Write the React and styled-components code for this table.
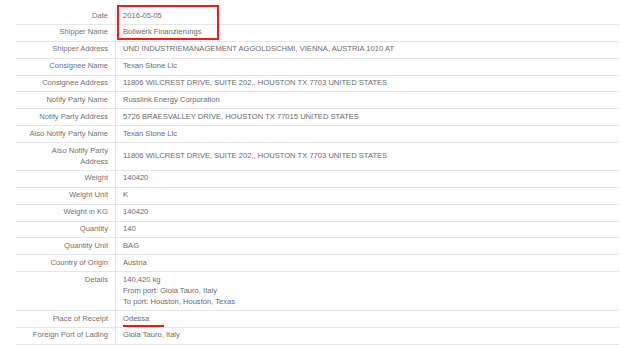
import styled, { createGlobalStyle } from "styled-components";

const Global = createGlobalStyle`
  html, body { margin: 0; padding: 0; background: #fff; }
  body { font-family: "Liberation Sans", Arial, Helvetica, sans-serif; }
`;

const Page = styled.div`
  padding: 8px 0 0 16px;
`;

const Wrap = styled.div`
  position: relative;
  width: 603px;
`;

const Table = styled.table`
  width: 100%;
  border-collapse: collapse;
  table-layout: fixed;
  font-size: 7.6px;
  line-height: 10.9px;
`;

const Row = styled.tr`
  border-bottom: 1px solid #e6e6e6;
`;

const Label = styled.td`
  width: 92px;
  padding: 2.55px 7px 2.45px 0;
  text-align: right;
  color: #727272;
  vertical-align: ${({ $top }) => ($top ? "top" : "middle")};
`;

const Value = styled.td`
  padding: 2.55px 7px 2.45px 7px;
  border-left: 1px solid #e6e6e6;
  color: #6a6a6a;
  vertical-align: middle;
`;

const Line = styled.div``;

const Marked = styled.span`
  position: relative;
  &::after {
    content: "";
    position: absolute;
    left: 0;
    bottom: -4px;
    width: 41px;
    height: 2px;
    background: #e8191b;
  }
`;

const Box = styled.div`
  position: absolute;
  top: -3px;
  left: 101px;
  width: 98px;
  height: 31px;
  border: 2px solid #ee1c1f;
  pointer-events: none;
`;

const ROWS = [
  ["Date", "2016-05-05"],
  ["Shipper Name", "Bollwerk Finanzierungs"],
  ["Shipper Address", "UND INDUSTRIEMANAGEMENT AGGOLDSCHMI, VIENNA, AUSTRIA 1010 AT"],
  ["Consignee Name", "Texan Stone Llc"],
  ["Consignee Address", "11806 WILCREST DRIVE, SUITE 202,, HOUSTON TX 7703 UNITED STATES"],
  ["Notify Party Name", "Russlink Energy Corporation"],
  ["Notify Party Address", "5726 BRAESVALLEY DRIVE, HOUSTON TX 77015 UNITED STATES"],
  ["Also Notify Party Name", "Texan Stone Llc"],
  ["Also Notify Party Address", "11806 WILCREST DRIVE, SUITE 202,, HOUSTON TX 7703 UNITED STATES"],
  ["Weight", "140420"],
  ["Weight Unit", "K"],
  ["Weight in KG", "140420"],
  ["Quantity", "140"],
  ["Quantity Unit", "BAG"],
  ["Country of Origin", "Austria"],
  ["Details", ["140,420 kg", "From port: Gioia Tauro, Italy", "To port: Houston, Houston, Texas"]],
  ["Place of Receipt", "Odessa", true],
  ["Foreign Port of Lading", "Gioia Tauro, Italy"],
];

export default function App() {
  return (
    <Page>
      <Global />
      <Wrap>
        <Table>
          <tbody>
            {ROWS.map(([label, value, marked]) => (
              <Row key={label}>
                <Label $top={Array.isArray(value)}>
                  {label === "Also Notify Party Address" ? (
                    <>Also Notify Party<br />Address</>
                  ) : label}
                </Label>
                <Value>
                  {Array.isArray(value)
                    ? value.map((l) => <Line key={l}>{l}</Line>)
                    : marked ? <Marked>{value}</Marked> : value}
                </Value>
              </Row>
            ))}
          </tbody>
        </Table>
        <Box />
      </Wrap>
    </Page>
  );
}
